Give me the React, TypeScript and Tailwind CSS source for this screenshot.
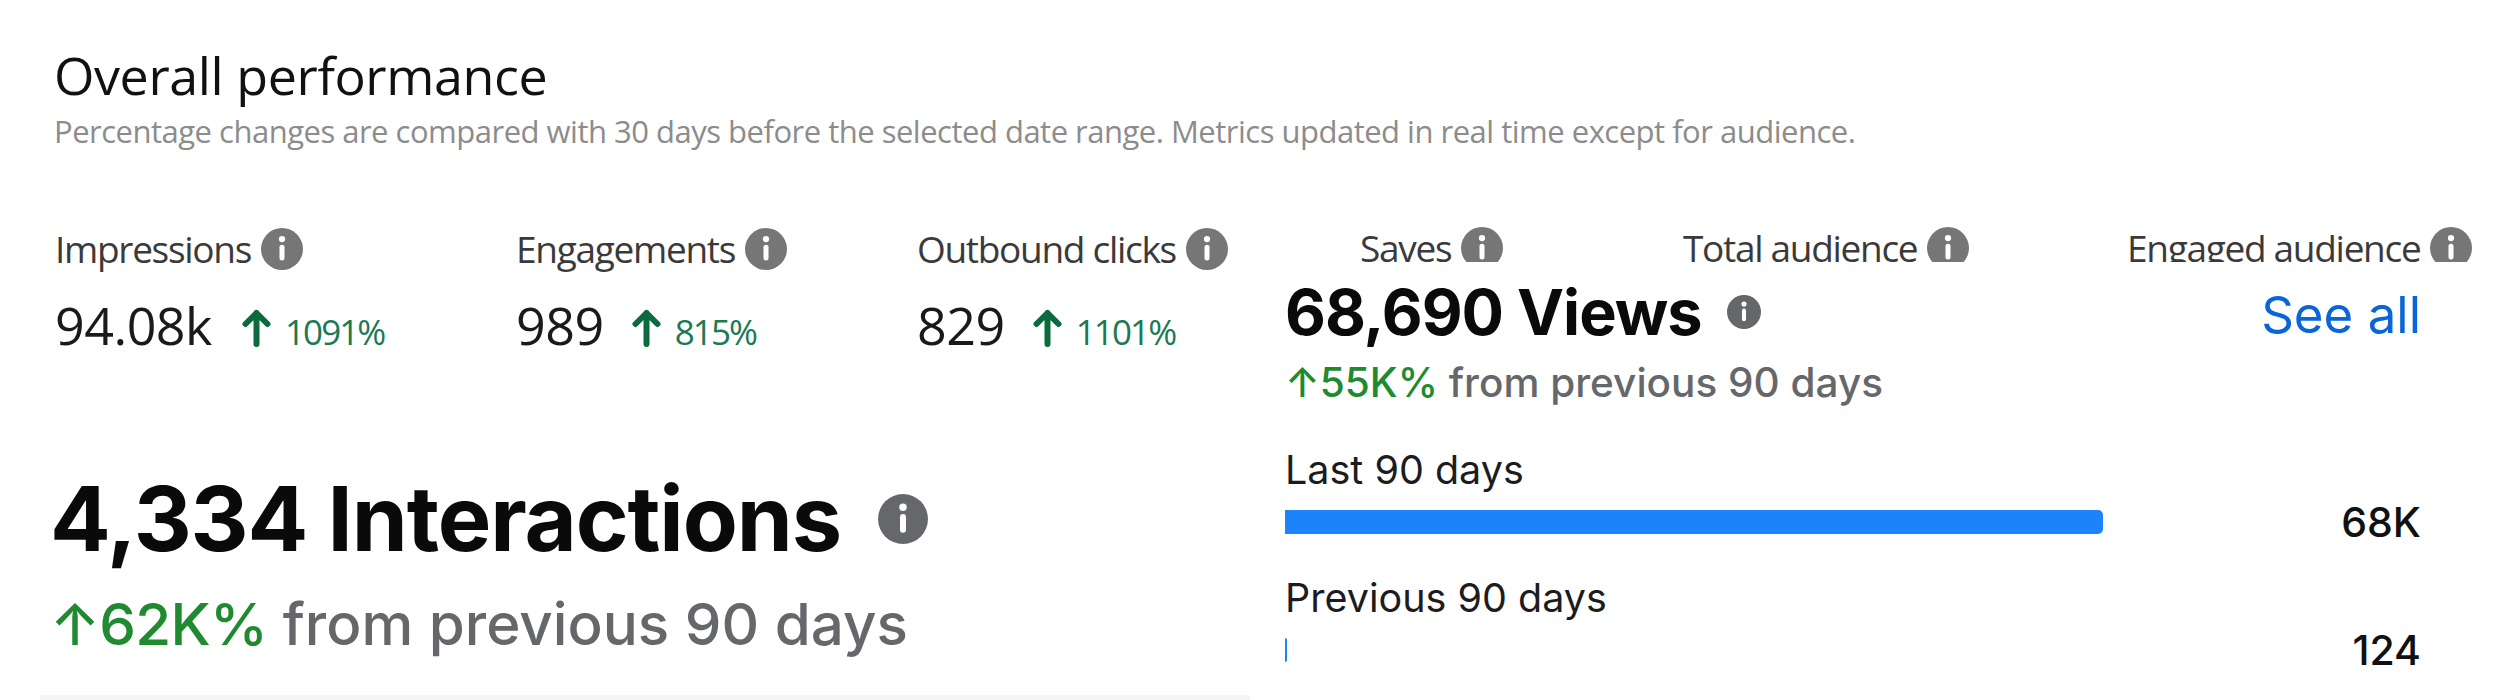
const InfoIcon = ({ className }: { className: string }) => (
  <svg viewBox="0 0 40 40" className={className}>
    <circle cx="20" cy="20" r="20" fill="currentColor" />
    <circle cx="20" cy="10.5" r="3" fill="#fff" />
    <rect x="17.6" y="16" width="4.8" height="15" rx="2.4" fill="#fff" />
  </svg>
);

const GreenArrow = () => (
  <svg viewBox="0 0 29 38" className="w-[29px] h-[38px] shrink-0 text-[#0b6b3f]">
    <path
      d="M14.5 35V4M3.5 15L14.5 4L25.5 15"
      fill="none"
      stroke="currentColor"
      strokeWidth="6"
      strokeLinecap="round"
      strokeLinejoin="round"
    />
  </svg>
);

interface MetricType {
  label: string;
  value?: string;
  change?: string;
  width: string;
  arrowGap?: string;
}

const Metric = ({ label, value, change, width, arrowGap }: MetricType) => (
  <div className={`shrink-0 ${width}`}>
    <div className="flex items-center h-[43px]">
      <span className="text-[37px] leading-[43px] tracking-[-1.3px] text-[#3a3a3a] whitespace-nowrap">
        {label}
      </span>
      <InfoIcon className="w-[42px] h-[42px] ml-[10px] text-[#767676] shrink-0" />
    </div>
    {value && (
      <div className="flex items-end mt-[33px] h-[44px]">
        <span className="text-[52px] leading-[44px] tracking-[-0.5px] text-[#1a1a1a]">
          {value}
        </span>
        <span className={`flex items-end ${arrowGap}`}>
          <GreenArrow />
          <span className="ml-[14px] text-[35px] leading-[30px] tracking-[-1.9px] text-[#1b7a52]">
            {change}
          </span>
        </span>
      </div>
    )}
  </div>
);

const BarRow = ({ label, value, barWidth }: { label: string; value: string; barWidth: string }) => (
  <div>
    <div className="text-[39.5px] leading-[46px] text-[#1c1c1e]">{label}</div>
    <div className="flex items-center justify-between mt-[14px] h-[30px] pr-[79px]">
      <div className={`h-[24px] bg-[#1c83fb] rounded-r-[5px] ${barWidth}`} />
      <span className="text-[41px] leading-[30px] font-medium text-[#111]">{value}</span>
    </div>
  </div>
);

export default function App() {
  return (
    <div className="flex w-[2500px] h-[700px] bg-white overflow-hidden">
      {/* Left: LinkedIn style metrics + interactions */}
      <div className="w-[1250px] shrink-0 flex flex-col font-['Open_Sans',sans-serif]">
        <div className="pl-[54px] pt-[43px]">
          <h1 className="text-[52px] leading-[64px] font-medium tracking-[-0.4px] text-[#111]">
            Overall performance
          </h1>
          <p className="mt-[4px] text-[31px] leading-[40px] tracking-[-0.5px] text-[#8c8c8c] whitespace-nowrap">
            Percentage changes are compared with 30 days before the selected date range. Metrics updated in real time except for audience.
          </p>
        </div>
        <div className="flex pl-[55px] mt-[76px]">
          <Metric label="Impressions" value="94.08k" change="1091%" width="w-[461px]" arrowGap="ml-[30px]" />
          <Metric label="Engagements" value="989" change="815%" width="w-[401px]" arrowGap="ml-[28px]" />
          <Metric label="Outbound clicks" value="829" change="1101%" width="w-[333px]" arrowGap="ml-[28px]" />
        </div>
        <div className="pl-[50px] mt-[128px] font-['Inter',sans-serif]">
          <div className="flex items-center h-[88px]">
            <span className="text-[90px] leading-[88px] font-bold tracking-[-1.1px] text-[#0a0a0a]">
              4,334 Interactions
            </span>
            <InfoIcon className="w-[50px] h-[50px] ml-[37px] text-[#65676b] shrink-0" />
          </div>
          <div className="mt-[29px] text-[58.3px] leading-[64px] font-medium whitespace-nowrap text-[#65676b]">
            <span className="text-[#1f8a2f] tracking-[-0.7px]">↑62K%</span> from previous 90 days
          </div>
        </div>
        <div className="mt-auto ml-[40px] h-[5px] bg-[#f4f5f6]" />
      </div>

      {/* Right: views panel, clips the metrics row above it */}
      <div className="w-[1250px] shrink-0 flex flex-col">
        <div className="flex h-[36px] mt-[226px] pl-[110px] overflow-hidden font-['Open_Sans',sans-serif]">
          <Metric label="Saves" width="w-[323px]" />
          <Metric label="Total audience" width="w-[444px]" />
          <Metric label="Engaged audience" width="w-[370px]" />
        </div>
        <div className="pl-[35px] pt-[16px] font-['Inter',sans-serif]">
          <div className="flex items-center justify-between h-[68px] pr-[79px]">
            <div className="flex items-center">
              <span className="text-[63px] leading-[68px] font-bold tracking-[-1px] text-[#0a0a0a]">
                68,690 Views
              </span>
              <InfoIcon className="w-[34px] h-[34px] ml-[25px] text-[#65676b] shrink-0" />
            </div>
            <span className="text-[51px] leading-[68px] pt-[6px] text-[#0a66d8]">See all</span>
          </div>
          <div className="mt-[13px] text-[40.5px] leading-[48px] font-medium text-[#65676b] whitespace-nowrap">
            <span className="text-[#1f8a2f]">↑55K%</span> from previous 90 days
          </div>
          <div className="mt-[40px] flex flex-col gap-[38px]">
            <BarRow label="Last 90 days" value="68K" barWidth="w-[818px]" />
            <BarRow label="Previous 90 days" value="124" barWidth="w-[2px]" />
          </div>
        </div>
      </div>
    </div>
  );
}
